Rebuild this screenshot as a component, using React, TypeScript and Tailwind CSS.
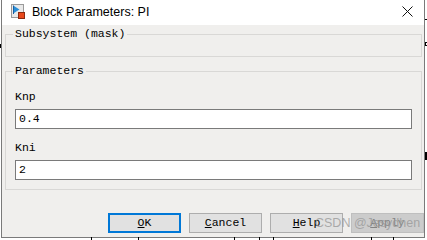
import React from 'react';

const mono = { fontFamily: '"Liberation Mono", "DejaVu Sans Mono", monospace' };

function BlockIcon() {
  return (
    <svg width="14" height="15" viewBox="0 0 14 15">
      <rect x="0.5" y="0.5" width="12" height="13" fill="#e9e9e9" stroke="#9a9a9a" />
      <line x1="2.5" y1="1.5" x2="2.5" y2="10" stroke="#1c5fa0" />
      <path d="M3 2 L8.5 5.5 L3 9 Z" fill="#2a8fd8" />
      <rect x="7.5" y="8.5" width="6" height="6" fill="#e8481c" stroke="#8a2a10" />
    </svg>
  );
}

function CloseIcon() {
  return (
    <svg width="11" height="11" viewBox="0 0 11 11">
      <path d="M0.5 0.5 L10.5 10.5 M10.5 0.5 L0.5 10.5" stroke="#111" strokeWidth="1" fill="none" />
    </svg>
  );
}

function Field({ label, value }: { label: string; value: string }) {
  return (
    <div className="flex flex-col">
      <div className="h-[12px] leading-[12px] text-[11.5px] text-black" style={mono}>{label}</div>
      <div
        className="mt-[6px] h-[20px] w-[397px] border border-[#7a7a7a] bg-white pl-[3px] text-[11.5px] leading-[18px] text-black"
        style={mono}
      >
        {value}
      </div>
    </div>
  );
}

function Button({ children, primary, disabled }: { children: React.ReactNode; primary?: boolean; disabled?: boolean }) {
  return (
    <div
      className={[
        'flex h-[20px] w-[73px] items-center justify-center whitespace-nowrap text-[11.5px]',
        primary
          ? 'border-2 border-[#0078d7] bg-[#e1e1e1] text-black'
          : disabled
            ? 'border border-[#bfbfbf] bg-[#cccccc] text-[#838383]'
            : 'border border-[#adadad] bg-[#e1e1e1] text-black',
      ].join(' ')}
      style={mono}
    >
      {children}
    </div>
  );
}

export default function App() {
  return (
    <div className="relative h-[240px] w-[427px] overflow-hidden bg-white">
      {/* diagram marks behind the dialog */}
      <div className="absolute bottom-0 left-[91px] h-[3px] w-px bg-black" />
      <div className="absolute bottom-0 left-[138px] h-[3px] w-px bg-black" />
      <div className="absolute bottom-0 left-[234px] h-[3px] w-px bg-black" />
      <div className="absolute bottom-0 left-[259px] h-[3px] w-px bg-black" />
      <div className="absolute bottom-0 left-[273px] h-[3px] w-px bg-black" />
      <div className="absolute bottom-0 left-[371px] h-[3px] w-px bg-black" />
      <div className="absolute bottom-0 left-[393px] h-[3px] w-px bg-black" />
      <div className="absolute left-0 top-[44px] h-[4px] w-px bg-black" />
      <div className="absolute right-0 top-[19px] h-px w-[2px] bg-black" />
      <div className="absolute right-0 top-[42px] h-[4px] w-[2px] border border-r-0 border-black" />
      <div className="absolute right-0 top-[152px] h-[8px] w-[2px] bg-black" />

      <div className="ml-px flex h-[238px] w-[424px] flex-col border-x border-b border-[#7a7a7a] bg-[#f0efed]">
        {/* title bar */}
        <div className="flex h-[25px] shrink-0 items-center bg-white pl-[9px] pr-[11px]">
          <div className="mt-[-2px]">
            <BlockIcon />
          </div>
          <span
            className="ml-[7px] text-[12.5px] text-black"
            style={{ fontFamily: '"Liberation Sans", Arial, sans-serif' }}
          >
            Block Parameters: PI
          </span>
          <div className="ml-auto mt-[-2px]">
            <CloseIcon />
          </div>
        </div>

        {/* body */}
        <div className="flex flex-col pl-[3px] pt-[9px]">
          <div className="relative h-[23px] w-[417px] border border-[#d9d8d6]">
            <span
              className="absolute left-[7px] top-[-7px] whitespace-nowrap bg-[#f0efed] px-[2px] text-[11.5px] leading-[12px] text-black"
              style={mono}
            >
              Subsystem (mask)
            </span>
          </div>

          <div className="relative mt-[14px] flex h-[119px] w-[417px] flex-col gap-[13px] border border-[#d9d8d6] pl-[9px] pt-[19px]">
            <span
              className="absolute left-[7px] top-[-7px] whitespace-nowrap bg-[#f0efed] px-[2px] text-[11.5px] leading-[12px] text-black"
              style={mono}
            >
              Parameters
            </span>
            <Field label="Knp" value="0.4" />
            <Field label="Kni" value="2" />
          </div>

          <div className="relative mt-[23px] flex gap-[8px] pl-[103px]">
            <Button primary>
              <span className="underline">O</span>K
            </Button>
            <Button>
              <span className="underline">C</span>ancel
            </Button>
            <Button>
              <span className="underline">H</span>elp
            </Button>
            <Button disabled>
              <span className="underline">A</span>pply
            </Button>
            <span
              className="absolute left-[310px] top-px whitespace-nowrap text-[12.5px] leading-[18px] text-[rgba(150,150,150,0.75)]"
              style={{ fontFamily: '"Liberation Sans", Arial, sans-serif' }}
            >
              CSDN @Jesydhen
            </span>
          </div>
        </div>
      </div>
    </div>
  );
}
